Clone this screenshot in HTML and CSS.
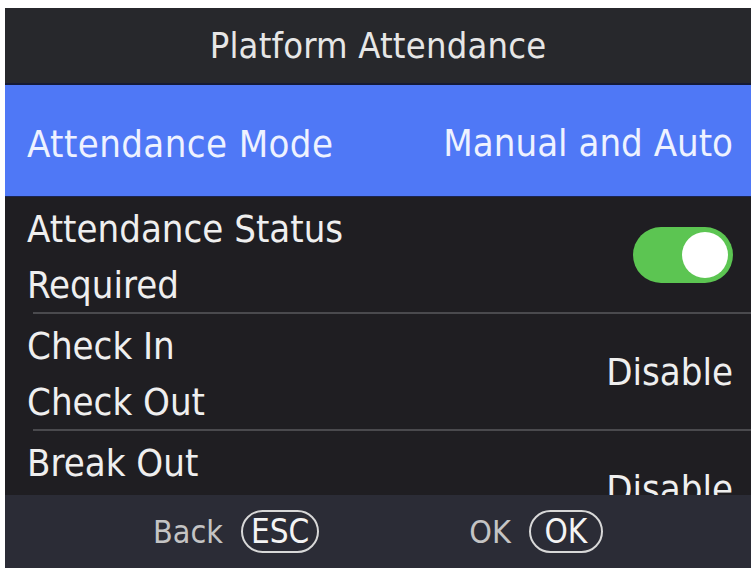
FILE: index.html
```html
<!DOCTYPE html>
<html lang="en">
<head>
    <meta charset="UTF-8">
    <meta name="viewport" content="width=device-width, initial-scale=1.0">
    <title>Platform Attendance</title>
    <link rel="stylesheet" href="styles.css">
</head>
<body>
    <div class="screen">
        <div class="title-bar">Platform Attendance</div>
        <div class="row row-active">
            <span class="label">Attendance Mode</span>
            <span class="value">Manual and Auto</span>
        </div>
        <div class="list">
            <div class="group">
                <div class="lines">
                    <div>Attendance Status</div>
                    <div>Required</div>
                </div>
                <div class="switch on"><span class="knob"></span></div>
            </div>
            <div class="group">
                <div class="lines">
                    <div>Check In</div>
                    <div>Check Out</div>
                </div>
                <span class="value">Disable</span>
            </div>
            <div class="group">
                <div class="lines">
                    <div>Break Out</div>
                </div>
                <span class="value">Disable</span>
            </div>
        </div>
        <div class="footer">
            <div class="hint">Back <span class="key">ESC</span></div>
            <div class="hint">OK <span class="key">OK</span></div>
        </div>
    </div>
</body>
</html>
```

FILE: styles.css
```css
body {
    margin: 0;
    background: #fff;
    font-family: "DejaVu Sans Condensed", "DejaVu Sans", sans-serif;
}
.screen {
    width: 746px;
    height: 560px;
    margin: 8px 0 0 5px;
    background: #1f1e22;
    display: flex;
    flex-direction: column;
    overflow: hidden;
}
.title-bar {
    height: 75px;
    flex-shrink: 0;
    background: #27282c;
    border-bottom: 2px solid #141a36;
    color: #e6e6e6;
    font-size: 36px;
    letter-spacing: 0.2px;
    display: flex;
    align-items: center;
    justify-content: center;
}
.row {
    display: flex;
    align-items: center;
    justify-content: space-between;
    padding: 0 18px 0 22px;
}
.row-active {
    height: 112px;
    flex-shrink: 0;
    box-sizing: border-box;
    padding-top: 7px;
    background: #4f78f6;
    border-bottom: 1px solid #1a2450;
    color: #eef2ff;
    font-size: 38px;
}
.row-active .label {
    letter-spacing: 0.4px;
}
.list {
    flex: 1;
    overflow: hidden;
}
.group {
    height: 115px;
    padding: 4px 18px 0 22px;
    box-sizing: border-box;
    display: flex;
    align-items: center;
    justify-content: space-between;
    color: #efefef;
    font-size: 38px;
}
.group + .group {
    border-top: 2px solid #4a4a4e;
    height: 117px;
    margin-left: 28px;
    padding-left: 0;
}
.group + .group .lines {
    margin-left: -6px;
}
.lines {
    align-self: flex-start;
    line-height: 56px;
}
.value {
    margin-top: -3px;
}
.switch {
    width: 100px;
    height: 56px;
    border-radius: 28px;
    background: #5cc552;
    position: relative;
    margin: -4px 0 0 0;
}
.knob {
    position: absolute;
    right: 5px;
    top: 5px;
    width: 46px;
    height: 46px;
    border-radius: 50%;
    background: #fff;
}
.footer {
    height: 73px;
    flex-shrink: 0;
    background: #2b2c36;
    display: flex;
    align-items: center;
    justify-content: center;
    gap: 150px;
    color: #c4c4c4;
    font-size: 32px;
}
.hint {
    display: flex;
    align-items: center;
    gap: 18px;
}
.key {
    border: 2px solid #d8d8d8;
    border-radius: 22px;
    height: 43px;
    min-width: 74px;
    padding: 0 8px;
    box-sizing: border-box;
    display: flex;
    align-items: center;
    justify-content: center;
    color: #f4f4f4;
    font-size: 33px;
}
```
